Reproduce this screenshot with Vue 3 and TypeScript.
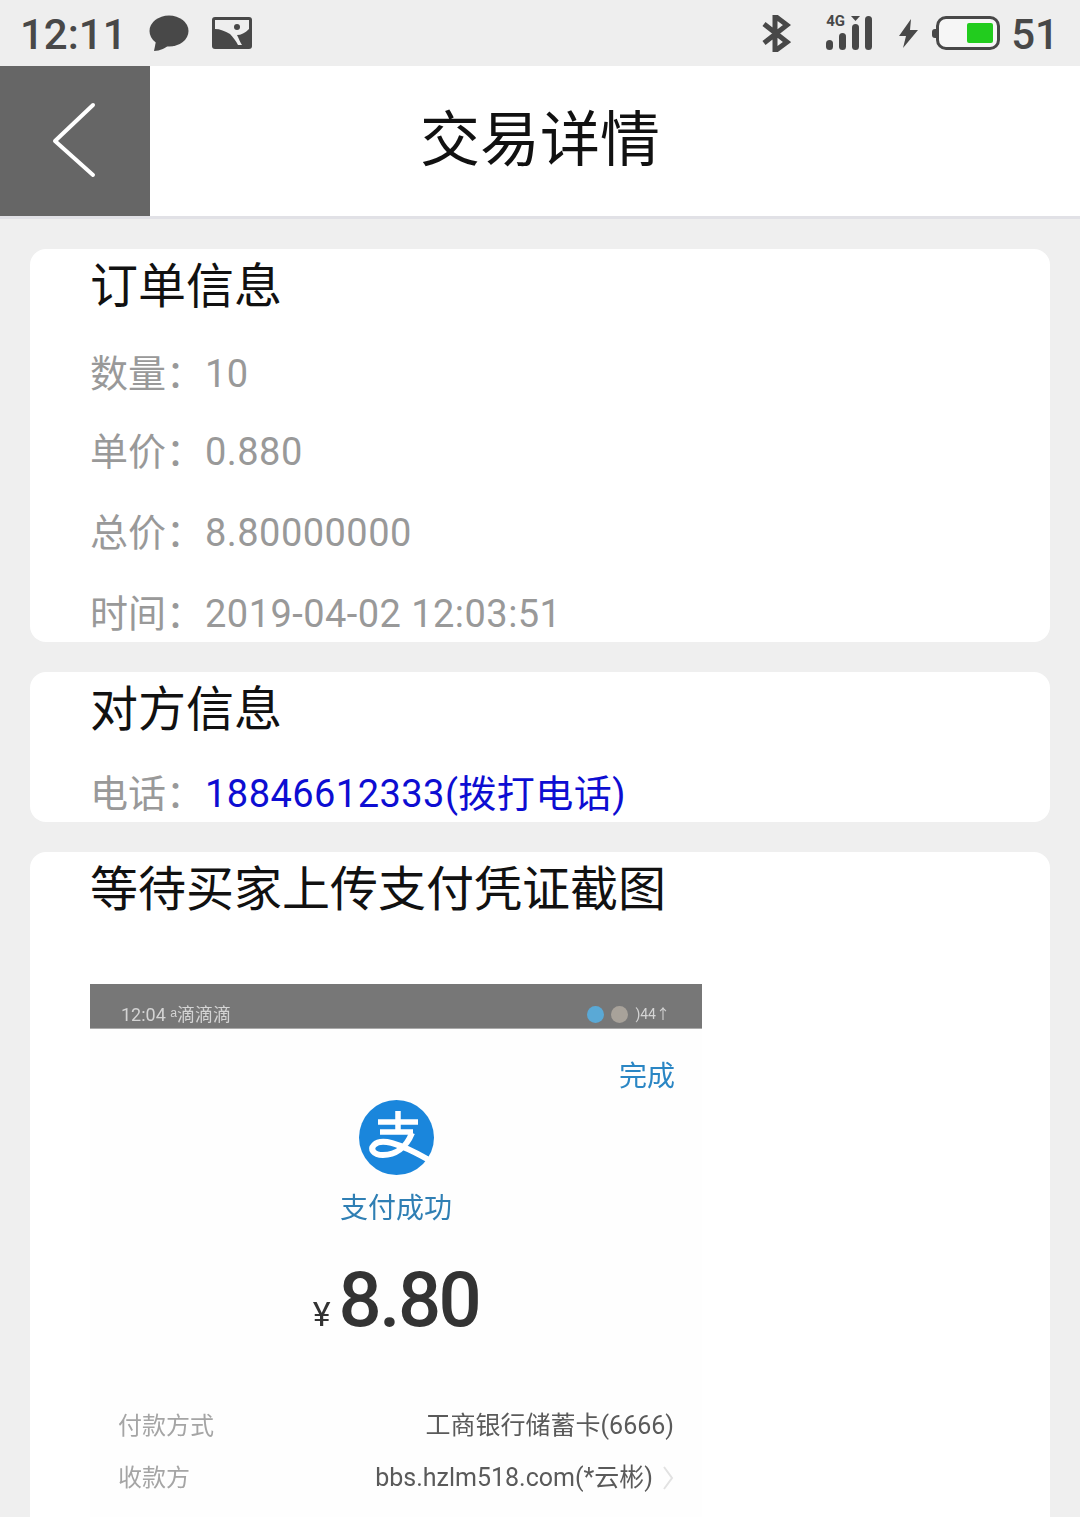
<script setup lang="ts">
const orderRows = [
  { label: '数量：', value: '10' },
  { label: '单价：', value: '0.880' },
  { label: '总价：', value: '8.80000000' },
  { label: '时间：', value: '2019-04-02 12:03:51' },
]
const signalBars = [
  { x: 0, y: 24, h: 10 },
  { x: 13, y: 17, h: 17 },
  { x: 26, y: 8, h: 26 },
  { x: 39, y: 0, h: 34 },
]
</script>

<template>
  <div class="page">
    <div class="status">
      <span class="time">12:11</span>
      <svg class="ic-chat" width="40" height="37" viewBox="0 0 40 37">
        <ellipse cx="20" cy="16" rx="19.5" ry="15.5" fill="#484848" />
        <path d="M7 26 L5 36 C11 36 17 33 21 29 Z" fill="#484848" />
      </svg>
      <svg class="ic-pic" width="40" height="32" viewBox="0 0 40 32">
        <rect width="40" height="32" rx="3" fill="#484848" />
        <path d="M3 3 H37 V12 C33 16 29 18 25 18 C27 22 28 25 30 28 L26 28 C24 24 21 20 18 17 C13 14 8 12 3 12 Z" fill="#eee" />
        <circle cx="25" cy="10" r="3" fill="#484848" />
      </svg>
      <div class="grow"></div>
      <svg class="ic-bt" width="29" height="37" viewBox="0 0 29 37">
        <path d="M2 9 L25 27 L13 36 V1 L25 10 L2 28" fill="none" stroke="#484848" stroke-width="5" />
      </svg>
      <div class="signal">
        <span class="net">4G</span>
        <svg width="46" height="34" viewBox="0 0 46 34">
          <rect v-for="b in signalBars" :key="b.x" :x="b.x" :y="b.y" width="7" :height="b.h" rx="3.5" fill="#484848" />
          <path d="M25 0 H34 L29.5 5 Z" fill="#484848" />
        </svg>
      </div>
      <svg class="ic-bolt" width="19" height="29" viewBox="0 0 19 29">
        <path d="M12 0 L0 17 H7 L4 29 L19 11 H11 Z" fill="#484848" />
      </svg>
      <div class="battery">
        <div class="nub"></div>
        <div class="cell"><div class="charge"></div></div>
      </div>
      <span class="level">51</span>
    </div>

    <div class="header">
      <div class="back">
        <svg width="150" height="150" viewBox="0 0 150 150">
          <path d="M93 39 L55 75 L93 109" fill="none" stroke="#fff" stroke-width="4" stroke-linecap="round" stroke-linejoin="round" />
        </svg>
      </div>
      <div class="title">交易详情</div>
    </div>

    <div class="card order">
      <div class="heading">订单信息</div>
      <div v-for="row in orderRows" :key="row.label" class="row">
        {{ row.label }}<span class="value">{{ row.value }}</span>
      </div>
    </div>

    <div class="card contact">
      <div class="heading">对方信息</div>
      <div class="row">电话：<a class="phone">18846612333(拨打电话)</a></div>
    </div>

    <div class="card proof">
      <div class="heading">等待买家上传支付凭证截图</div>
      <div class="shot">
        <div class="shot-bar">
          <span>12:04 ᵃ滴滴滴</span>
          <div class="shot-icons">
            <i class="dot blue"></i>
            <i class="dot tan"></i>
            <span>)44↑</span>
          </div>
        </div>
        <div class="done">完成</div>
        <svg class="pay-logo" width="75" height="75" viewBox="0 0 75 75">
          <circle cx="37.5" cy="37.5" r="37.5" fill="#1a86dc" />
          <path d="M19 22 H59 M39 11 V32 M21 32 H54" fill="none" stroke="#fff" stroke-width="5.5" />
          <path d="M53 33 C47 48 36 55 24 55 C14 55 11 49 15 45 C22 38 38 42 70 60" fill="none" stroke="#fff" stroke-width="6" />
        </svg>
        <div class="pay-ok">支付成功</div>
        <div class="amount"><small>¥</small>8.80</div>
        <div class="line first">
          <span class="key">付款方式</span>
          <span class="val">工商银行储蓄卡(6666)</span>
        </div>
        <div class="line">
          <span class="key">收款方</span>
          <span class="val">bbs.hzlm518.com(*云彬)
            <svg width="12" height="26" viewBox="0 0 12 26">
              <path d="M2 2 L10 13 L2 24" fill="none" stroke="#e2e2e2" stroke-width="2" />
            </svg>
          </span>
        </div>
      </div>
    </div>
  </div>
</template>

<style>
html,
body {
  margin: 0;
  background: #efefef;
}
</style>

<style scoped>
.page {
  height: 1517px;
  overflow: hidden;
  background: #efefef;
  font-family: Roboto, "Noto Sans CJK SC", sans-serif;
}

.status {
  height: 66px;
  display: flex;
  align-items: flex-start;
  background: #eeeeee;
  color: #484848;
}
.time {
  margin: 10px 0 0 20px;
  width: 106px;
  font-size: 42px;
  font-weight: 500;
  line-height: 49px;
}
.ic-chat {
  margin: 15px 0 0 23px;
}
.ic-pic {
  margin: 17px 0 0 23px;
}
.grow {
  flex: 1;
}
.ic-bt {
  margin-top: 15px;
}
.signal {
  position: relative;
  margin: 16px 0 0 35px;
  width: 46px;
}
.net {
  position: absolute;
  left: 0;
  top: -3px;
  font-size: 15px;
  line-height: 16px;
  font-weight: 700;
}
.ic-bolt {
  margin: 19px 0 0 27px;
}
.battery {
  display: flex;
  align-items: center;
  margin: 16px 0 0 14px;
}
.nub {
  width: 4px;
  height: 9px;
  background: #484848;
  border-radius: 3px 0 0 3px;
}
.cell {
  box-sizing: border-box;
  width: 64px;
  height: 34px;
  padding: 4px 4px 4px 0;
  display: flex;
  justify-content: flex-end;
  border: 3px solid #484848;
  border-radius: 10px;
  background: #f6f6f6;
}
.charge {
  width: 26px;
  background: #22cc1e;
  border-radius: 2px;
}
.level {
  margin: 10px 21px 0 11px;
  font-size: 42px;
  font-weight: 500;
  line-height: 49px;
}

.header {
  display: grid;
  grid-template-columns: 150px 1fr 150px;
  height: 150px;
  background: #fff;
  border-bottom: 3px solid #e1e1e6;
}
.back {
  height: 150px;
  background: #666666;
}
.back svg {
  display: block;
}
.title {
  font-size: 60px;
  line-height: 150px;
  text-align: center;
  color: #111;
}

.card {
  margin: 30px 30px 0;
  padding-left: 60px;
  background: #fff;
  border-radius: 16px;
  overflow: hidden;
}
.order {
  height: 393px;
}
.contact {
  height: 150px;
}
.proof {
  height: 700px;
}
.heading {
  padding-top: 2px;
  margin-bottom: -2px;
  font-size: 48px;
  line-height: 72px;
  color: #111;
}
.row {
  font-size: 38px;
  line-height: 80px;
  color: #999;
}
.order .row:nth-of-type(2) {
  margin-top: 13px;
}
.order .row:nth-of-type(3) {
  margin-top: -2px;
}
.order .row:nth-of-type(4),
.order .row:nth-of-type(5) {
  margin-top: 1px;
}
.contact .row {
  margin-top: 10px;
}
.value,
.phone {
  margin-left: 1px;
  letter-spacing: 0.45px;
}
.phone {
  color: #0d0dd2;
}

.shot {
  width: 612px;
  height: 600px;
  margin-top: 60px;
  background: #fefefe;
  filter: blur(0.6px);
}
.shot-bar {
  box-sizing: content-box;
  height: 41px;
  padding: 0 32px 3px 31px;
  display: flex;
  justify-content: space-between;
  align-items: flex-end;
  background: #777777;
  border-bottom: 1px solid #aaa;
  font-size: 18px;
  line-height: 21px;
  color: #d4d4d4;
}
.shot-icons {
  display: flex;
  align-items: center;
  gap: 7px;
  font-size: 14px;
}
.dot {
  width: 17px;
  height: 17px;
  border-radius: 50%;
}
.dot.blue {
  background: #5aa9d6;
}
.dot.tan {
  background: #a8a29a;
}
.done {
  margin-top: 28px;
  padding-right: 27px;
  text-align: right;
  font-size: 28px;
  line-height: 40px;
  color: #2a86c4;
}
.pay-logo {
  display: block;
  margin: 3px auto 0;
}
.pay-ok {
  margin-top: 14px;
  text-align: center;
  font-size: 28px;
  line-height: 40px;
  color: #2f7fb4;
}
.amount {
  margin-top: 26px;
  font-size: 76px;
  font-weight: 500;
  line-height: 90px;
  text-align: center;
  color: #333;
  letter-spacing: -2.5px;
}
.amount small {
  margin-right: 8px;
  font-size: 34px;
  font-weight: 400;
  letter-spacing: 0;
}
.line {
  display: flex;
  justify-content: space-between;
  margin-top: 16px;
  padding: 0 28px;
  font-size: 24px;
  line-height: 36px;
}
.line.first {
  margin-top: 49px;
}
.key {
  color: #a5a5a5;
}
.val {
  display: flex;
  align-items: center;
  gap: 9px;
  font-size: 25px;
  color: #5a5a5a;
}
</style>
